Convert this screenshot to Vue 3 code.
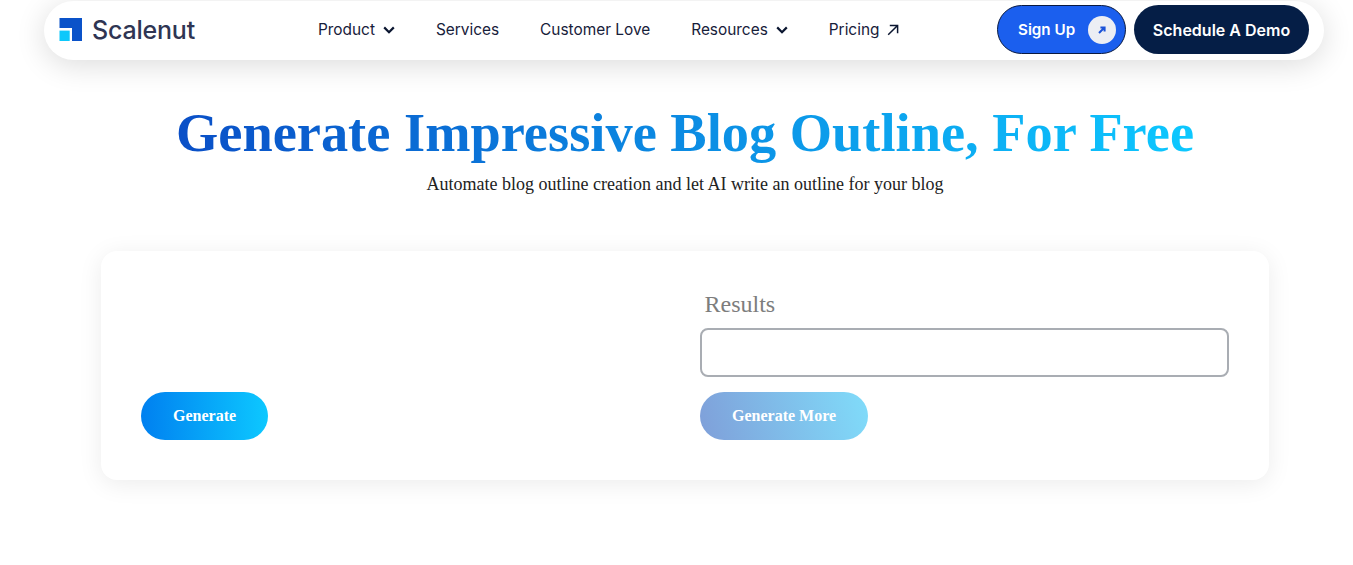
<script setup>
const navItems = [
  { label: 'Product', icon: 'chev' },
  { label: 'Services' },
  { label: 'Customer Love' },
  { label: 'Resources', icon: 'chev' },
  { label: 'Pricing', icon: 'arrow' }
]
</script>

<template>
  <div class="page">
    <header class="nav">
      <a class="brand">
        <svg class="logo" viewBox="0 0 23 23" width="23" height="23">
          <path d="M0.5 0H23V23H13V10H0.5Z" fill="#0a52c9" />
          <rect x="0.5" y="12.6" width="10.2" height="10.4" fill="#0dc8fb" />
        </svg>
        <span class="brand-name">Scalenut</span>
      </a>
      <nav class="links">
        <a v-for="item in navItems" :key="item.label" class="link">
          {{ item.label }}
          <svg v-if="item.icon === 'chev'" class="ico" viewBox="0 0 12 8" width="12" height="8">
            <path d="M1.2 1.4 6 6.2l4.8-4.8" fill="none" stroke="#0b1630" stroke-width="2.2" />
          </svg>
          <svg v-if="item.icon === 'arrow'" class="ico" viewBox="0 0 12 12" width="12" height="12">
            <path d="M1.2 10.8 10.3 1.7M2.8 1.4h7.8v7.8" fill="none" stroke="#0b1630" stroke-width="1.5" />
          </svg>
        </a>
      </nav>
      <div class="actions">
        <a class="signup">
          Sign Up
          <span class="disc">
            <svg viewBox="0 0 10 10" width="10" height="10">
              <path d="M2 8 7.2 2.8M3.4 2.4h4.2v4.2" fill="none" stroke="#1b52d8" stroke-width="2" />
            </svg>
          </span>
        </a>
        <a class="demo">Schedule A Demo</a>
      </div>
    </header>

    <section class="hero">
      <h1 class="title"><span>Generate Impressive Blog Outline, For Free</span></h1>
      <p class="sub">Automate blog outline creation and let AI write an outline for your blog</p>
    </section>

    <section class="card">
      <div class="col col-left">
        <button class="btn">Generate</button>
      </div>
      <div class="col col-right">
        <label class="result-label">Results</label>
        <div class="output"></div>
        <button class="btn more">Generate More</button>
      </div>
    </section>
  </div>
</template>

<style scoped>
.page {
  height: 565px;
  overflow: hidden;
  background: #fff;
  font-family: "Liberation Serif", serif;
  color: #222;
}
.nav {
  margin: 1px 29px 0 44px;
  height: 59px;
  box-sizing: border-box;
  display: flex;
  align-items: center;
  background: #fff;
  border-radius: 30px;
  box-shadow: 0 5px 30px rgba(0, 0, 0, 0.14);
  padding: 0 15px 2px 15px;
}
.brand {
  display: flex;
  align-items: center;
  gap: 10px;
  width: 259px;
}
.logo { display: block; }
.brand-name {
  font-family: Inter, sans-serif;
  font-weight: 550;
  font-size: 25px;
  letter-spacing: -0.2px;
  color: #2f3553;
}
.links {
  display: flex;
  align-items: center;
  gap: 41px;
  flex: 1;
}
.link {
  display: flex;
  align-items: center;
  gap: 8px;
  font-family: Inter, sans-serif;
  font-size: 15.4px;
  color: #17203a;
}
.actions {
  display: flex;
  gap: 8px;
  align-items: center;
}
.signup, .demo {
  height: 49px;
  box-sizing: border-box;
  border-radius: 25px;
  display: flex;
  align-items: center;
  color: #fff;
  font-family: Inter, sans-serif;
  font-weight: 600;
  font-size: 15.2px;
}
.signup {
  width: 129px;
  background: #1b5fee;
  border: 1px solid #0a1a40;
  padding: 0 9px 0 20px;
  justify-content: space-between;
}
.disc {
  width: 28px;
  height: 28px;
  border-radius: 50%;
  background: #eceef4;
  display: flex;
  align-items: center;
  justify-content: center;
}
.demo {
  width: 175px;
  justify-content: center;
  background: #051e46;
  font-size: 16px;
}
.hero {
  margin: 0 84px 0 101px;
  text-align: center;
}
.title {
  margin: 39px 0 0;
  font-size: 54.4px;
  line-height: 69px;
  font-weight: 700;
}
.title span {
  background: linear-gradient(90deg, #0a4fc7 0%, #0dc8ff 100%);
  -webkit-background-clip: text;
  background-clip: text;
  color: transparent;
}
.sub {
  margin: 6px 0 0;
  font-size: 18px;
  line-height: 21px;
  color: #222;
}
.card {
  margin: 56px 84px 0 101px;
  height: 229px;
  box-sizing: border-box;
  background: #fff;
  border-radius: 16px;
  box-shadow: 0 4px 24px rgba(0, 0, 0, 0.08);
  padding: 40px 40px 40px;
  display: grid;
  grid-template-columns: 559px 529px;
}
.col {
  display: flex;
  flex-direction: column;
  align-items: flex-start;
}
.col-left { justify-content: flex-end; }
.result-label {
  font-size: 24px;
  line-height: 27px;
  color: #7d7d7d;
  margin-left: 4.5px;
}
.output {
  width: 100%;
  height: 49px;
  box-sizing: border-box;
  border: 2px solid #a9adb3;
  border-radius: 8px;
  margin-top: 10px;
}
.btn {
  height: 48px;
  border: 0;
  border-radius: 24px;
  padding: 0 32px;
  font-family: "Liberation Serif", serif;
  font-weight: 700;
  font-size: 16px;
  color: #fff;
  background: linear-gradient(90deg, #0080f0 0%, #0dc8ff 100%);
}
.more {
  margin-top: 15px;
  background: linear-gradient(75deg, #7f9fd9 0%, #80dcfa 100%);
}
</style>
